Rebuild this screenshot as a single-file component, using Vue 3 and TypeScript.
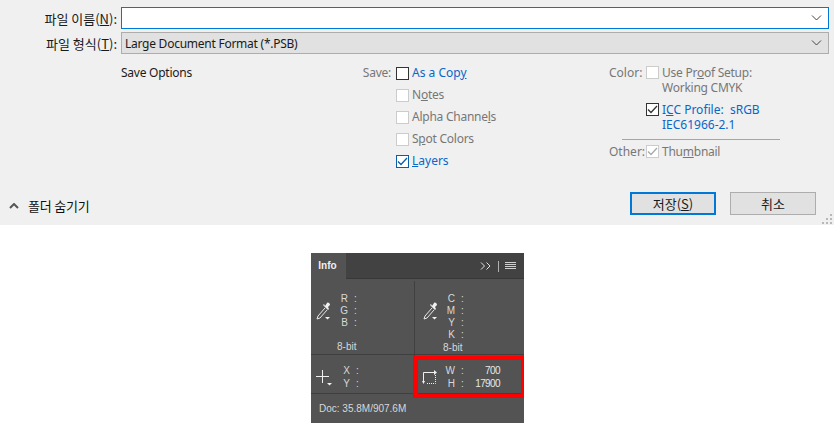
<script setup lang="ts">
const saveRows = [
  { pre: 'N', key: 'o', post: 'tes' },
  { pre: 'Alpha Channe', key: 'l', post: 's' },
  { pre: 'S', key: 'p', post: 'ot Colors' },
];
</script>

<template>
  <div class="page">
    <section class="dialog">
      <div class="field">
        <label class="field-label">파일 이름(<u>N</u>):</label>
        <div class="input">
          <svg class="caret" width="11" height="6" viewBox="0 0 11 6"><path d="M1 .5l4.500 4.500L10 .5" /></svg>
        </div>
      </div>
      <div class="field">
        <label class="field-label">파일 형식(<u>T</u>):</label>
        <div class="select">
          <span>Large Document Format (*.PSB)</span>
          <svg class="caret" width="11" height="6" viewBox="0 0 11 6"><path d="M1 .5l4.500 4.500L10 .5" /></svg>
        </div>
      </div>

      <div class="options">
        <div class="opt-title">Save Options</div>

        <div class="opt-save">
          <div class="opt-row">
            <span class="opt-label">Save:</span>
            <span class="box dark"></span>
            <span class="link">As a Cop<u>y</u></span>
          </div>
          <div v-for="r in saveRows" :key="r.pre" class="opt-row">
            <span class="opt-label"></span>
            <span class="box off"></span>
            <span class="muted">{{ r.pre }}<u>{{ r.key }}</u>{{ r.post }}</span>
          </div>
          <div class="opt-row">
            <span class="opt-label"></span>
            <span class="box blue">
              <svg width="11" height="11" viewBox="0 0 11 11"><path d="M1 5.500l3 3L10 2" /></svg>
            </span>
            <span class="link"><u>L</u>ayers</span>
          </div>
        </div>

        <div class="opt-color">
          <div class="color-row">
            <span class="color-label">Color:</span>
            <span class="box off"></span>
            <span class="muted stack">Use Pr<u>o</u>of Setup:<br />Working CMYK</span>
          </div>
          <div class="color-row icc">
            <span class="color-label"></span>
            <span class="box dark">
              <svg width="11" height="11" viewBox="0 0 11 11"><path d="M1 5.500l3 3L10 2" /></svg>
            </span>
            <span class="link stack">I<u>C</u>C Profile:&nbsp; sRGB<br />IEC61966-2.1</span>
          </div>
          <div class="rule"></div>
          <div class="color-row other">
            <span class="color-label">Other:</span>
            <span class="box off tick">
              <svg width="11" height="11" viewBox="0 0 11 11"><path d="M1 5.500l3 3L10 2" /></svg>
            </span>
            <span class="muted">Thu<u>m</u>bnail</span>
          </div>
        </div>
      </div>

      <div class="footer">
        <div class="folders">
          <svg width="10" height="6" viewBox="0 0 10 6"><path d="M1 5l4-4 4 4" /></svg>
          <span>폴더 숨기기</span>
        </div>
        <div class="buttons">
          <button class="btn primary">저장(<u>S</u>)</button>
          <button class="btn">취소</button>
        </div>
      </div>

      <svg class="grip" width="11" height="11" viewBox="0 0 11 11">
        <rect x="8" y="0" width="2" height="2" />
        <rect x="4" y="4" width="2" height="2" />
        <rect x="8" y="4" width="2" height="2" />
        <rect x="0" y="8" width="2" height="2" />
        <rect x="4" y="8" width="2" height="2" />
        <rect x="8" y="8" width="2" height="2" />
      </svg>
    </section>

    <section class="panel">
      <div class="tabs">
        <div class="tab">Info</div>
        <div class="tab-tools">
          <svg class="chev" width="12" height="8" viewBox="0 0 12 8"><path d="M1 .5L4.500 4 1 7.500M6.500 .5L10 4 6.500 7.500" /></svg>
          <span class="sep"></span>
          <svg class="menu" width="11" height="8" viewBox="0 0 11 8"><path d="M0 .5h11M0 2.500h11M0 4.500h11M0 6.500h11" /></svg>
        </div>
      </div>

      <div class="grid-top">
        <div class="cell">
          <svg class="picker" width="18" height="20" viewBox="0 0 18 20">
            <path class="hollow" d="M10 6l-7 8-1 3 3-1 7-8" />
            <path class="solid" d="M10 4l2-3c1-1 3 0 3 2l-2 2 1 2-1 1-5-5 1-1z" />
            <path class="solid" d="M10 15h5l-2.500 2.500z" />
          </svg>
          <div class="channels">
            <div><b>R</b><i>:</i></div>
            <div><b>G</b><i>:</i></div>
            <div><b>B</b><i>:</i></div>
          </div>
          <div class="bits">8-bit</div>
        </div>
        <div class="cell right">
          <svg class="picker" width="18" height="20" viewBox="0 0 18 20">
            <path class="hollow" d="M10 6l-7 8-1 3 3-1 7-8" />
            <path class="solid" d="M10 4l2-3c1-1 3 0 3 2l-2 2 1 2-1 1-5-5 1-1z" />
            <path class="solid" d="M10 15h5l-2.500 2.500z" />
          </svg>
          <div class="channels four">
            <div><b>C</b><i>:</i></div>
            <div><b>M</b><i>:</i></div>
            <div><b>Y</b><i>:</i></div>
            <div><b>K</b><i>:</i></div>
          </div>
          <div class="bits">8-bit</div>
        </div>
      </div>

      <div class="grid-mid">
        <div class="cell">
          <svg class="cross" width="17" height="17" viewBox="0 0 17 17">
            <path class="thin" d="M7.500 1v13M1 7.500h13" />
            <path class="solid" d="M12 14h5l-2.500 2.500z" />
          </svg>
          <div class="channels">
            <div><b>X</b><i>:</i></div>
            <div><b>Y</b><i>:</i></div>
          </div>
        </div>
        <div class="cell right">
          <svg class="marquee" width="15" height="15" viewBox="0 0 15 15">
            <path class="thin" d="M1.500 13V2.500H12" />
            <path class="dots" d="M13.500 5v8.500H4" />
            <path class="solid" d="M12 0l3 2.500-3 2.500zM0 11h3l-1.500 3z" />
          </svg>
          <div class="channels">
            <div><b>W</b><i>:</i><em>700</em></div>
            <div><b>H</b><i>:</i><em>17900</em></div>
          </div>
        </div>
      </div>

      <div class="doc">Doc: 35.8M/907.6M</div>
      <div class="highlight"></div>
    </section>
  </div>
</template>

<style>
html,
body {
  background: #fff;
}
</style>

<style scoped>
.page {
  width: 834px;
  height: 423px;
  overflow: hidden;
  font-family: "Noto Sans", "Noto Sans CJK KR", sans-serif;
  font-size: 12px;
  letter-spacing: -0.25px;
  color: #1a1a1a;
}

.dialog {
  position: relative;
  height: 225px;
  box-sizing: border-box;
  padding: 7px 5px 0 0;
  background: #f0f0f0;
  display: flex;
  flex-direction: column;
  gap: 3px;
}

.field {
  display: flex;
  height: 22px;
  align-items: center;
}
.field-label {
  width: 117px;
  text-align: right;
  margin-right: 4px;
  font-size: 13px;
  letter-spacing: 0;
  font-family: "Noto Sans CJK KR", sans-serif;
}
.input,
.select {
  flex: 1;
  height: 100%;
  box-sizing: border-box;
  display: flex;
  align-items: center;
  justify-content: space-between;
  padding: 0 6px 0 3px;
}
.input {
  background: #fff;
  border: 1px solid #0078d7;
  justify-content: flex-end;
}
.select {
  background: #e1e1e1;
  border: 1px solid #adadad;
}
.caret path {
  fill: none;
  stroke: #444;
  stroke-width: 1;
}

.options {
  display: flex;
  margin-top: 5px;
  line-height: 22px;
}
.opt-title {
  margin-left: 121px;
  width: 220px;
}
.opt-save {
  width: 268px;
}
.opt-row {
  display: flex;
  align-items: center;
  height: 22px;
}
.opt-label {
  width: 50px;
  margin-right: 5px;
  text-align: right;
  color: #777;
}
.box {
  width: 13px;
  height: 13px;
  flex: none;
  box-sizing: border-box;
  border: 1px solid #333;
  background: #fff;
  margin-right: 3px;
  display: inline-flex;
  align-items: center;
  justify-content: center;
}
.box svg path {
  fill: none;
  stroke: #333;
  stroke-width: 1.300;
}
.box.off {
  border-color: #ccc;
}
.box.off svg path {
  stroke: #aaa;
}
.box.blue {
  border-color: #0a5ea8;
}
.box.blue svg path {
  stroke: #0a5ea8;
}
.link {
  color: #0a66c8;
  letter-spacing: 0;
}
.muted {
  color: #777;
}

.opt-color {
  width: 220px;
  flex: none;
}
.color-row {
  display: flex;
  line-height: 15px;
  align-items: flex-start;
  padding-top: 3px;
}
.color-row .box {
  margin-top: 1px;
}
.color-label {
  width: 33px;
  margin-right: 4px;
  text-align: right;
  color: #777;
  white-space: nowrap;
  letter-spacing: 0;
}
.icc {
  padding-top: 7px;
}
.rule {
  width: 158px;
  height: 1px;
  background: #a5a5a5;
  margin: 7px 0 0 13px;
}
.other {
  padding-top: 4px;
}

.footer {
  margin-top: auto;
  margin-bottom: 10px;
  display: flex;
  justify-content: space-between;
  align-items: center;
}
.folders {
  display: flex;
  align-items: center;
  gap: 9px;
  padding: 4px 0 0 9px;
  font-family: "Noto Sans CJK KR", sans-serif;
  font-size: 13px;
  letter-spacing: -0.2px;
  color: #111;
}
.folders svg path {
  fill: none;
  stroke: #555;
  stroke-width: 2;
}
.buttons {
  display: flex;
  gap: 14px;
  margin-right: 13px;
}
.btn {
  width: 86px;
  height: 23px;
  padding: 0;
  background: #e1e1e1;
  border: 1px solid #adadad;
  font: 13px "Noto Sans CJK KR", sans-serif;
  color: #1a1a1a;
}
.btn.primary {
  border: 2px solid #0078d7;
}
.grip {
  position: absolute;
  right: 1px;
  bottom: 0;
  fill: #b8b8b8;
}

.panel {
  position: relative;
  width: 213px;
  height: 170px;
  margin: 28px 0 0 311px;
  background: #535353;
  color: #d8d8d8;
  font-family: "Liberation Sans", Arial, sans-serif;
  font-size: 10px;
  letter-spacing: 0;
  display: flex;
  flex-direction: column;
}
.tabs {
  height: 26px;
  flex: none;
  display: flex;
  background: #424242;
  box-shadow: inset 0 -1px 0 #383838;
}
.tab {
  width: 35px;
  background: #535353;
  color: #f0f0f0;
  font-weight: bold;
  line-height: 25px;
  text-align: center;
  padding-right: 2px;
  box-sizing: border-box;
}
.tab-tools {
  margin-left: auto;
  display: flex;
  align-items: center;
  gap: 6px;
  padding-right: 8px;
}
.chev path {
  fill: none;
  stroke: #e0e0e0;
  stroke-width: 1;
}
.sep {
  width: 1px;
  height: 11px;
  background: #b0b0b0;
}
.menu path {
  stroke: #cfcfcf;
  stroke-width: 1;
}
.grid-top,
.grid-mid {
  display: grid;
  grid-template-columns: 103px 1fr;
  border-bottom: 1px solid #3f3f3f;
  flex: none;
}
.grid-top {
  height: 75px;
}
.grid-mid {
  height: 38px;
}
.cell {
  position: relative;
}
.cell.right {
  border-left: 1px solid #404040;
  margin: 2px 0 0;
}
.grid-mid .cell.right {
  margin: 0;
}
.picker {
  position: absolute;
  left: 4px;
  top: 23px;
}
.grid-top .cell.right .picker {
  left: 7px;
  top: 21px;
}
.hollow {
  fill: none;
  stroke: #e8e8e8;
  stroke-width: 1;
}
.solid {
  fill: #f0f0f0;
}
.thin {
  fill: none;
  stroke: #f0f0f0;
  stroke-width: 1;
}
.dots {
  fill: none;
  stroke: #f0f0f0;
  stroke-width: 1;
  stroke-dasharray: 1 1;
}
.channels {
  position: absolute;
  left: 25px;
  top: 14px;
  width: 70px;
  line-height: 12px;
}
.grid-top .cell.right .channels {
  top: 12px;
  left: 28px;
}
.channels div {
  display: flex;
}
.channels b {
  width: 12px;
  text-align: right;
  font-weight: normal;
}
.channels i {
  font-style: normal;
  margin-left: 6px;
}
.channels em {
  font-style: normal;
  margin-left: auto;
  color: #e8e8e8;
  letter-spacing: -0.6px;
}
.bits {
  position: absolute;
  left: 26px;
  bottom: 2px;
}
.grid-top .cell.right .bits {
  left: 28px;
  bottom: 1px;
}
.grid-mid .channels {
  left: 28px;
  top: 9px;
  width: 57px;
  line-height: 13px;
}
.grid-mid .cell:first-child .channels {
  left: 27px;
}
.cross {
  position: absolute;
  left: 4px;
  top: 14px;
}
.marquee {
  position: absolute;
  left: 7px;
  top: 15px;
}
.doc {
  padding: 9px 0 0 8px;
}
.highlight {
  position: absolute;
  left: 102px;
  top: 103px;
  width: 111px;
  height: 42px;
  box-sizing: border-box;
  border-style: solid;
  border-color: #f00;
  border-width: 4px 3px 4px 5px;
}
</style>
